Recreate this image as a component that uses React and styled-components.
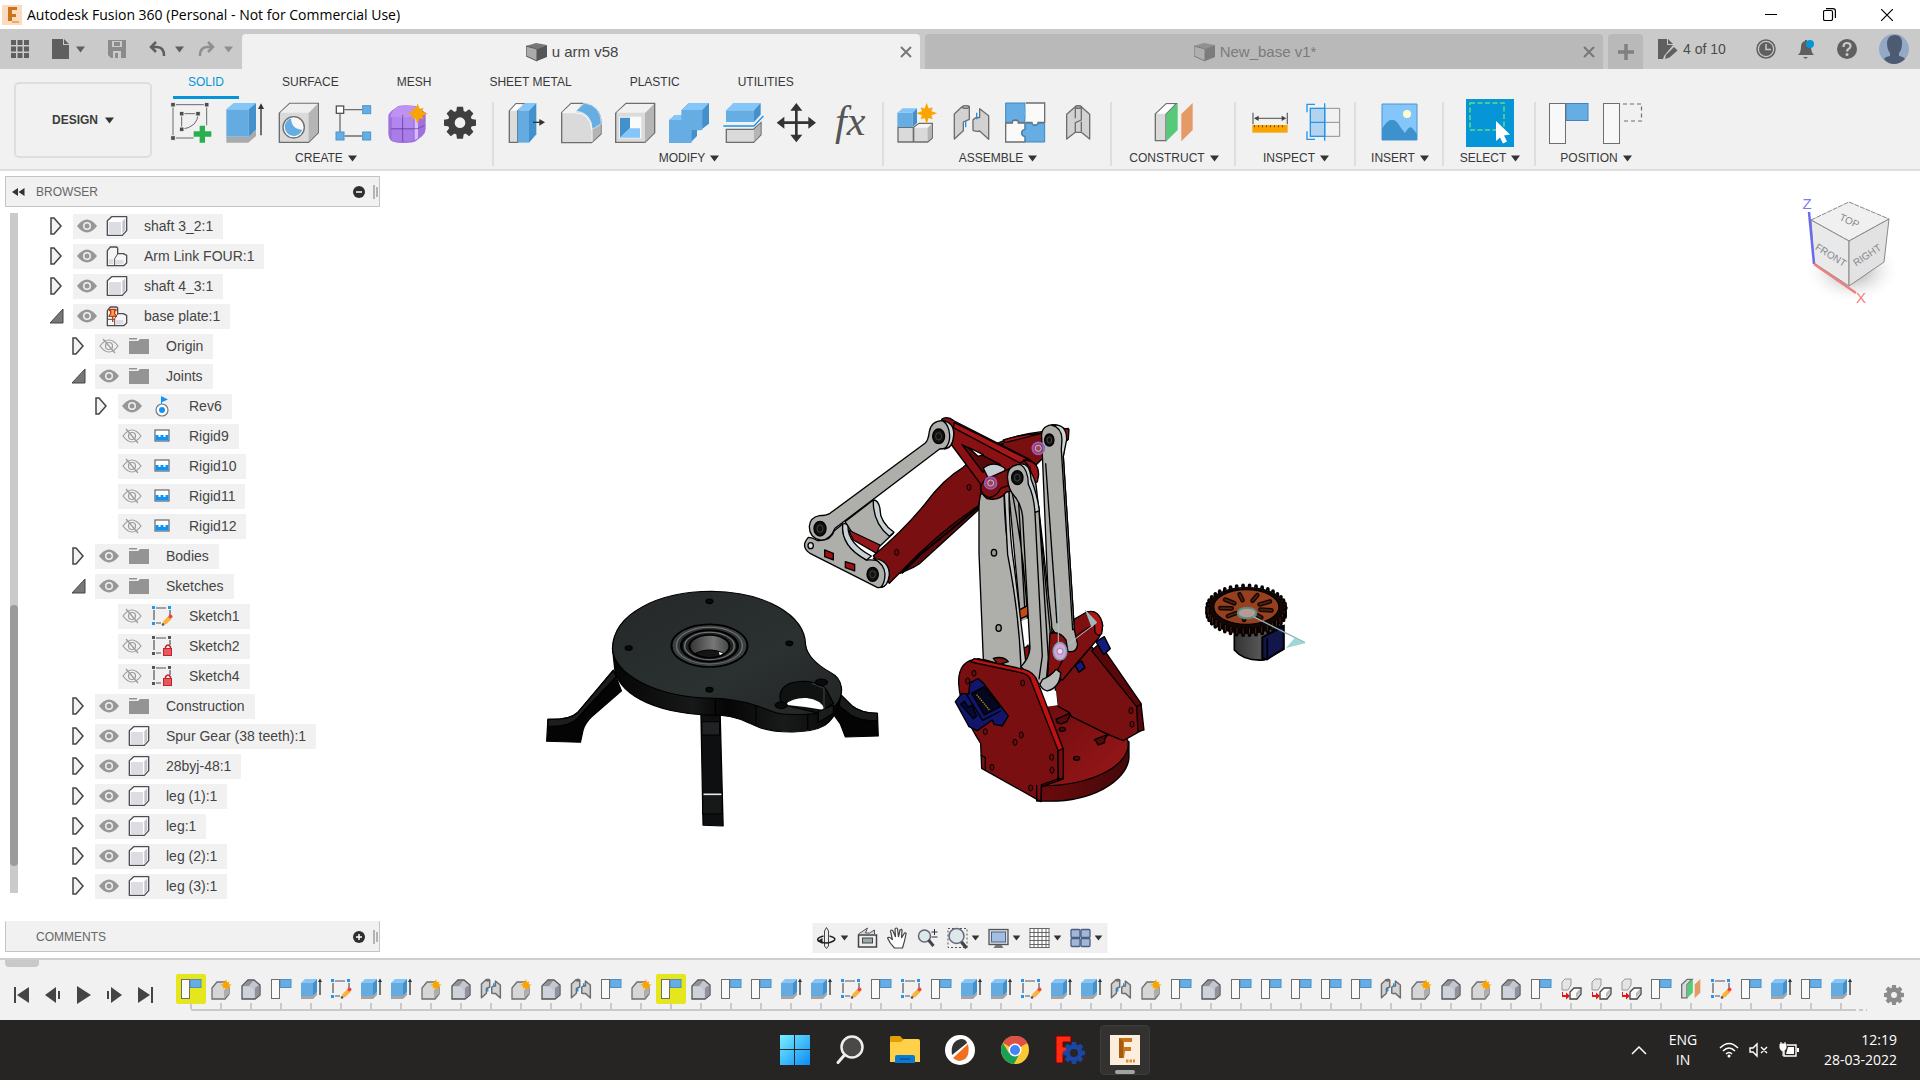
import React from "react";
import styled, { createGlobalStyle } from "styled-components";

const sans = '"Liberation Sans", Arial, sans-serif';
const system = '"Open Sans", "Noto Sans", sans-serif';

const GlobalStyle = createGlobalStyle`
  * { box-sizing: border-box; }
  body { margin: 0; background: #fff; font-family: ${sans}; color: #444; }
  button { border: 0; padding: 0; margin: 0; background: none; font: inherit; color: inherit; }
  ul { list-style: none; margin: 0; padding: 0; }
  svg { display: block; flex: none; }
`;

const Page = styled.div`
  min-height: 100vh;
  display: flex;
  flex-direction: column;
`;

/* ---------- title bar ---------- */
const TitleBar = styled.header`
  display: flex;
  align-items: center;
  height: 29px;
  padding: 0 4px 0 2px;
  gap: 5px;
  background: #fff;
  font-family: ${system};
  color: #000;
`;
const Title = styled.h1`
  margin: 0;
  flex: 1;
  font-size: 14px;
  font-weight: 400;
  line-height: 20px;
`;
const WindowControls = styled.div`
  display: flex;
`;
const WindowButton = styled.button`
  width: 58px;
  height: 29px;
  display: flex;
  align-items: center;
  justify-content: center;
`;

/* ---------- document tabs ---------- */
const DocumentBar = styled.div`
  display: flex;
  background: #cacaca;
  height: 40px;
  color: #4a4a4a;
`;
const QuickTools = styled.div`
  width: 242px;
  display: flex;
  align-items: center;
  gap: 23px;
  padding-left: 11px;
`;
const QuickPair = styled.div`
  display: flex;
  gap: 14px;
`;
const QuickButton = styled.button`
  display: flex;
  align-items: center;
  gap: ${(p) => p.$gap || 7}px;
  opacity: ${(p) => (p.$dim ? 0.55 : 1)};
`;
const DocumentTabs = styled.div`
  flex: 1;
  display: flex;
  gap: 5px;
  padding-top: 5px;
`;
const DocumentTab = styled.div`
  flex: 1;
  display: flex;
  align-items: center;
  padding: 0 5px;
  border-radius: 4px 4px 0 0;
  background: ${(p) => (p.$active ? "#f1f1f1" : "#b9b9b9")};
  color: ${(p) => (p.$active ? "#444" : "#7b7b7b")};
`;
const TabTitle = styled.button`
  flex: 1;
  display: flex;
  align-items: center;
  justify-content: center;
  gap: 5px;
  font-size: 15px;
  line-height: 20px;
`;
const CloseButton = styled.button`
  width: 18px;
  height: 20px;
  display: flex;
  align-items: center;
  justify-content: center;
`;
const NewTabButton = styled.button`
  width: 35px;
  display: flex;
  align-items: center;
  justify-content: center;
  border-radius: 4px 4px 0 0;
  background: #b9b9b9;
`;
const AccountTools = styled.div`
  width: 277px;
  display: flex;
  align-items: center;
  justify-content: space-between;
  padding: 0 11px 0 15px;
`;
const DocumentLimit = styled.button`
  display: flex;
  align-items: center;
  gap: 5px;
  font-size: 14px;
  line-height: 20px;
  padding-right: 8px;
`;

/* ---------- ribbon ---------- */
const Ribbon = styled.div`
  display: flex;
  padding-left: 14px;
  gap: 8px;
  background: #f1f1f1;
  border-bottom: 2px solid #dfdfdf;
`;
const WorkspaceButton = styled.button`
  width: 138px;
  height: 76px;
  margin-top: 13px;
  display: flex;
  align-items: center;
  justify-content: center;
  gap: 7px;
  border: 2px solid #dedede;
  border-radius: 5px;
  font-size: 12px;
  font-weight: 700;
  color: #3c3c3c;
`;
const RibbonBody = styled.div`
  flex: 1;
  display: flex;
  flex-direction: column;
`;
const RibbonTabs = styled.nav`
  display: flex;
  gap: 28px;
  padding-left: 13px;
`;
const RibbonTab = styled.button`
  height: 30px;
  padding: 0 15px;
  font-size: 12px;
  line-height: 27px;
  border-bottom: 3px solid ${(p) => (p.$active ? "#0696d7" : "transparent")};
  color: ${(p) => (p.$active ? "#0696d7" : "#383838")};
`;
const RibbonGroups = styled.div`
  display: flex;
  padding-bottom: 1px;
`;
const RibbonGroup = styled.section`
  display: flex;
  flex-direction: column;
  align-items: center;
  min-width: ${(p) => p.$min || 0}px;
  padding: 0 4px 0 ${(p) => (p.$first ? 4 : 6)}px;
`;
const RibbonDivider = styled.div`
  width: 2px;
  height: 64px;
  margin-top: 3px;
  background: #dedede;
`;
const ToolRow = styled.div`
  display: flex;
  height: 48px;
`;
const ToolButton = styled.button`
  width: 54px;
  height: 48px;
  display: flex;
  align-items: center;
  justify-content: center;
`;
const GroupLabel = styled.button`
  display: flex;
  align-items: center;
  gap: 5px;
  height: 20px;
  margin-top: 1px;
  font-size: 12px;
  line-height: 20px;
  color: #383838;
`;

/* ---------- workspace ---------- */
const Workspace = styled.main`
  position: relative;
  flex: 1;
  display: flex;
  background: #fff;
`;
const Scene = styled.svg`
  position: absolute;
  inset: 0;
  width: 100%;
  height: 100%;
`;
const ViewCube = styled.svg`
  position: absolute;
  top: 14px;
  right: 10px;
`;
const SidePanel = styled.aside`
  position: relative;
  width: 375px;
  margin: 5px 0 6px 5px;
  display: flex;
  flex-direction: column;
`;
const PanelBar = styled.div`
  display: flex;
  align-items: center;
  height: 31px;
  padding: 0 1px 0 6px;
  border: 1px solid #c4c4c4;
  border-top-color: ${(p) => (p.$open ? "#c4c4c4" : "#f1f1f1")};
  background: #f1f1f1;
  font-size: 12px;
  line-height: 20px;
  color: #666;
`;
const PanelLead = styled.span`
  width: 24px;
`;
const PanelTitle = styled.span`
  flex: 1;
`;
const PanelButton = styled.button`
  margin-right: 8px;
`;
const TreeArea = styled.div`
  flex: 1;
  display: flex;
  gap: 32px;
  padding: 4px 0 0 5px;
`;
const ScrollTrack = styled.div`
  width: 8px;
  height: 680px;
  margin-top: 2px;
  padding-top: 392px;
  background: #c9cacb;
`;
const ScrollThumb = styled.div`
  height: 261px;
  border-radius: 4px;
  background: #9a9b9c;
`;
const levels = [0, 22, 45];
const TreeRow = styled.li`
  display: flex;
  align-items: center;
  height: 30px;
  padding-left: ${(p) => levels[p.$level]}px;
`;
const Expander = styled.button`
  width: 23px;
  height: 22px;
`;
const TreeChip = styled.div`
  display: flex;
  align-items: center;
  height: 25px;
  padding: 0 10px 0 4px;
  background: #f1f1f1;
  font-size: 14px;
  line-height: 25px;
`;
const TreeIcon = styled.span`
  width: 22px;
  margin: 0 16px 0 9px;
`;
const NavBar = styled.div`
  position: absolute;
  left: 50%;
  bottom: 5px;
  transform: translateX(-50%);
  display: flex;
  align-items: center;
  gap: 8px;
  height: 30px;
  padding: 0 5px 0 3px;
  background: #f0f0f0;
`;
const NavButton = styled.button`
  display: flex;
  align-items: center;
  gap: 3px;
`;

/* ---------- timeline ---------- */
const Timeline = styled.section`
  position: relative;
  display: flex;
  height: 62px;
  padding-left: 13px;
  border-top: 2px solid #cecece;
  background: #f1f1f1;
`;
const TimelineHandle = styled.div`
  position: absolute;
  left: 5px;
  top: 0;
  width: 34px;
  height: 7px;
  border-radius: 0 0 4px 4px;
  background: #c9c9c9;
`;
const Playback = styled.div`
  width: 164px;
  display: flex;
  align-items: flex-start;
  gap: 13px;
  padding-top: 26px;
`;
const FeatureTrack = styled.ol`
  flex: 1;
  display: flex;
  margin: 0;
  padding: 14px 0 0;
  list-style: none;
`;
const Feature = styled.li`
  width: 30px;
  height: 37px;
  border-bottom: 2px solid #c9c9c9;
  &:first-child { border-image: linear-gradient(to right, transparent 50%, #c9c9c9 50%) 1; }
`;
const FeatureButton = styled.button`
  display: flex;
  align-items: center;
  justify-content: center;
  width: 30px;
  height: 30px;
  border-radius: 2px;
  background: ${(p) => (p.$marked ? "#e5e71c" : "transparent")};
`;
const Tick = styled.div`
  width: 2px;
  height: 6px;
  margin: -1px auto 0;
  background: #c9c9c9;
`;
const TrackEnd = styled.li`
  width: 11px;
  height: 2px;
  margin-top: 35px;
  background: repeating-linear-gradient(to right, transparent 0 3px, #c9c9c9 3px 7px);
`;
const SettingsButton = styled.button`
  width: 53px;
  display: flex;
  align-items: center;
  justify-content: center;
  padding-top: 10px;
`;

/* ---------- taskbar ---------- */
const Taskbar = styled.footer`
  display: grid;
  grid-template-columns: 1fr auto 1fr;
  height: 60px;
  background: #262524;
  color: #fff;
  font-family: ${system};
`;
const AppRow = styled.div`
  grid-column: 2;
  display: flex;
  align-items: center;
  gap: 5px;
`;
const AppButton = styled.button`
  width: 50px;
  height: 50px;
  display: flex;
  flex-direction: column;
  align-items: center;
  justify-content: center;
  border-radius: 4px;
  border: 1px solid ${(p) => (p.$active ? "#3c3c3b" : "transparent")};
  background: ${(p) => (p.$active ? "#333231" : "transparent")};
  padding-top: ${(p) => (p.$active ? 8 : 0)}px;
  gap: 5px;
`;
const ActiveMark = styled.span`
  width: 20px;
  height: 4px;
  border-radius: 2px;
  background: #a3a3a2;
`;
const Tray = styled.div`
  display: flex;
  align-items: center;
  justify-content: flex-end;
  gap: 21px;
  padding-right: 23px;
  font-size: 14px;
  line-height: 20px;
`;
const Language = styled.button`
  width: 30px;
  text-align: center;
`;
const Status = styled.button`
  display: flex;
  align-items: center;
  gap: 10px;
`;
const Clock = styled.time`
  min-width: 77px;
  text-align: right;
`;

/* ---------- shared drawings ---------- */
const Caret = ({ color = "#333", size = 9 }) => (
  <svg width={size} height={size - 2} viewBox="0 0 9 7"><path d="M0 0.5h9L4.500 6.500z" fill={color} /></svg>
);

const Icon = ({ box, size = 44, h, children }) => (
  <svg width={size} height={h || size} viewBox={box} aria-hidden="true">{children}</svg>
);

const G = "#6e6e6e";
const B = "#66ade3";
const Star = ({ x, y, r = 30, c = "#f9a400" }) => {
  const pts = [];
  for (let i = 0; i < 16; i++) {
    const a = (Math.PI * i) / 8 - Math.PI / 2;
    const q = i % 2 ? r * 0.48 : i % 4 ? r * 0.8 : r;
    pts.push(`${(x + q * Math.cos(a)).toFixed(1)},${(y + q * Math.sin(a)).toFixed(1)}`);
  }
  return <polygon points={pts.join(" ")} fill={c} />;
};
const Cog = ({ x, y, r, hole, c }) => (
  <g>
    {[0, 45, 90, 135, 180, 225, 270, 315].map((a) => (
      <path key={a} d={`M${x - r * 0.24} ${y - r * 0.65}l${r * 0.05} ${-r * 0.35}h${r * 0.38}l${r * 0.05} ${r * 0.35}z`} fill={c} transform={`rotate(${a} ${x} ${y})`} />
    ))}
    <circle cx={x} cy={y} r={(r * 0.76 + hole) / 2} fill="none" stroke={c} strokeWidth={r * 0.76 - hole} />
  </g>
);
const Joint = ({ paired, w = 4 }) => (
  <g fill="#d2d2d2" stroke={G} strokeWidth={w} strokeLinejoin="round">
    {paired ? (
      <>
        <path d="M223 162l22-21q14-6 23-1v38l-18 8v26l-27 25z" />
        <ellipse cx="257" cy="141" rx="10" ry="4" fill="#bbb" />
        <path d="M326 238V167l-27-21v27q-12-2-20 6v32q10 5 20 2z" />
        <path d="M257 182v20M290 158v20" stroke="#1b93ea" />
      </>
    ) : (
      <>
        <path d="M560 163l26-23q10-4 18 0l25 23v74l-25-20h-18l-26 20z" />
        <path d="M586 140v35M604 140v40l-18 8v28M604 180l-18 8M604 215v-30" fill="none" />
        <ellipse cx="595" cy="141" rx="9" ry="4" fill="#aaa" />
      </>
    )}
  </g>
);

const tools = {
  sketch: (
    <Icon box="507 303 132 132">
      <path d="M519 314h101v62M519 314v100h62M545 341h49M545 341v47M594 341q0 40-49 47" fill="none" stroke="#6a6a6a" strokeWidth="3" />
      {[[519, 314], [620, 314], [519, 414], [545, 341], [594, 341], [545, 388]].map(([x, y]) => (
        <rect key={x + "-" + y} x={x - 7} y={y - 7} width="14" height="14" fill="#4c4c4c" stroke="#f1f1f1" strokeWidth="3" />
      ))}
      <path d="M599 377h16v17h19v16h-19v18h-16v-18h-18v-16h18z" fill="#28b04f" />
    </Icon>
  ),
  extrude: (
    <Icon box="669 303 132 132">
      <path d="M679 410h66l23-20v18l-23 20h-66z" fill="#aaa" />
      <path d="M679 328l22-19h67l-22 19z" fill="#84c5fa" />
      <path d="M679 328h67v82h-67z" fill="#64abe2" />
      <path d="M746 328l22-19v80l-22 21z" fill="#4290cc" />
      <path d="M783 406V322" stroke="#333" strokeWidth="4" />
      <path d="M774 327l9-17 9 17z" fill="#333" />
    </Icon>
  ),
  hole: (
    <Icon box="831 303 132 132">
      <path d="M838 340l31-30h86v88l-29 29h-88z" fill="#dadada" stroke={G} strokeWidth="4" />
      <path d="M840 338l30-27h83l-27 27z" fill="#efefef" />
      <path d="M926 340l27-28v86l-27 28z" fill="#b5b5b5" />
      <circle cx="881" cy="382" r="32" fill="#f8f8f8" stroke={G} strokeWidth="4" />
      <path d="M873 355a27 27 0 1 0 34 34q-32 0-34-34z" fill={B} />
    </Icon>
  ),
  pattern: (
    <Icon box="984 303 132 132">
      <path d="M1024 329h53M1011 341v55M1024 408h53" stroke={G} strokeWidth="4" />
      <rect x="1000" y="318" width="22" height="22" fill="#fff" stroke="#555" strokeWidth="4" />
      {[[1078, 316], [1078, 395], [998, 395]].map(([x, y]) => <rect key={x + y} x={x + 1} y={y + 1} width="24" height="24" fill={B} stroke="#4896d3" strokeWidth="3" />)}
    </Icon>
  ),
  form: (
    <Icon box="1149 303 132 132">
      <path d="M1159 350q0-10 10-18l20-14q20-5 52 0l30 20v50q0 10-10 20l-20 16q-10 6-40 5t-35-8q-8-8-7-30z" fill="#a071dc" />
      <path d="M1165 350q5-25 30-32h40q15 5 12 20l-14 14q-35 5-68 0z" fill="#bd92f3" />
      <rect x="1170" y="352" width="30" height="34" rx="5" fill="#b087ee" /><rect x="1203" y="352" width="31" height="34" rx="5" fill="#b087ee" />
      <rect x="1170" y="389" width="30" height="35" rx="5" fill="#a97de8" /><rect x="1203" y="389" width="31" height="35" rx="5" fill="#a97de8" />
      <path d="M1238 352v68l10-5V355z" fill="#d7bcff" /><path d="M1166 386h82l20-10M1202 345v80" stroke="#5f3c9a" strokeWidth="2" fill="none" />
      <Star x={1247} y={341} r={31} />
    </Icon>
  ),
  gear: <Icon box="1317 303 132 132"><Cog x={1380} y={368} r={48} hole={16} c="#3f3f3f" /></Icon>,
  press: (
    <Icon box="45 303 132 132">
      <path d="M58 333l20-22h35l-30 22v94H58z" fill="#dcdcdc" stroke={G} strokeWidth="4" /><path d="M60 332l18-19h20l-19 19z" fill="#fff" />
      <path d="M83 332l22-23h34l-22 23z" fill="#84c5fa" /><path d="M83 332h34v96H83z" fill="#64abe2" /><path d="M117 332l22-23v94l-22 25z" fill="#4290cc" />
      <path d="M129 367h22" stroke="#333" strokeWidth="4" /><path d="M148 357l17 10-17 10z" fill="#333" />
    </Icon>
  ),
  fillet: (
    <Icon box="207 303 132 132">
      <path d="M215 338l28-28h35q55 8 55 60v32l-28 26h-90z" fill="#dadada" stroke={G} strokeWidth="4" />
      <path d="M217 337l27-25h30l-18 25z" fill="#f3f3f3" /><path d="M305 390l27-20v30l-27 27z" fill="#b5b5b5" />
      <path d="M258 333l25-24q50 7 51 62l-27 17q-3-50-49-55z" fill={B} stroke="#f1f1f1" strokeWidth="2" />
      <path d="M217 338h35q50 0 54 55v32" fill="none" stroke="#fafafa" strokeWidth="3" />
    </Icon>
  ),
  shell: (
    <Icon box="369 303 132 132">
      <path d="M377 340l31-30h86v88l-29 29h-88z" fill="#dadada" stroke={G} strokeWidth="4" />
      <path d="M379 338l30-26h83l-27 26z" fill="#f1f1f1" /><path d="M465 340l27-28v86l-27 28z" fill="#b5b5b5" />
      <path d="M388 350h66v65h-66z" fill="#fafafa" /><path d="M390 353h30v32l-30 28z" fill="#4290cc" /><path d="M390 413l30-28h30v28z" fill="#84c5fa" />
    </Icon>
  ),
  combine: (
    <Icon box="531 303 132 132">
      <path d="M537 361l18-16h20v-15l22-21h60v62l-26 20h-10v17l-20 20h-64z" fill="#4290cc" />
      <path d="M537 361h38v-31h62v60h-32v38h-68z" fill="#66ade3" /><path d="M575 330l22-21h60l-20 21zM537 361l18-16h20v16z" fill="#84c5fa" />
    </Icon>
  ),
  split: (
    <Icon box="690 303 132 132">
      <path d="M705 331l22-22h82l-20 22z" fill="#84c5fa" /><path d="M705 331h84v35h-84z" fill="#66ade3" /><path d="M789 331l20-22v35l-20 22z" fill="#4290cc" />
      <path d="M697 378h92l28-30" fill="none" stroke="#1b93ea" strokeWidth="4" />
      <path d="M706 388h82l22-20v36l-22 23h-82z" fill="#dadada" stroke={G} strokeWidth="4" /><path d="M789 389l19-18v33l-19 21z" fill="#b5b5b5" />
    </Icon>
  ),
  move: (
    <Icon box="855 303 132 132">
      <path d="M919 328v80M880 368h78" stroke="#333" strokeWidth="8" />
      <path d="M901 332l18-23 18 23zM901 404l18 23 18-23zM883 350l-23 18 23 18zM955 350l23 18-23 18z" fill="#333" />
    </Icon>
  ),
  fx: (
    <svg width="54" height="60" viewBox="0 0 54 60"><text x="11" y="42" fontFamily='"Liberation Serif", serif' fontStyle="italic" fontSize="42" fill="#555">fx</text></svg>
  ),
  component: (
    <Icon box="45 123 132 132">
      <path d="M54 202h46v44H54zM101 202l16-12h40v44l-14 12h-42z" fill="#dadada" stroke={G} strokeWidth="4" /><path d="M103 203l15-11h36l-12 11z" fill="#f5f5f5" />
      <path d="M143 204l12-11v40l-12 10z" fill="#b5b5b5" />
      <path d="M52 158h46v43H52z" fill={B} /><path d="M52 158l16-13h43l-13 13z" fill="#84c5fa" /><path d="M98 158l13-13v44l-13 12z" fill="#4290cc" />
      <Star x={140} y={160} r={32} />
    </Icon>
  ),
  joint: <Icon box="207 123 132 132"><Joint paired /></Icon>,
  rigidGroup: (
    <Icon box="369 123 132 132">
      <path d="M377 129h58v22q10-2 10 9t-10 9v18h-20q2-8-9-8t-9 8h-20z" fill={B} stroke="#4086bd" strokeWidth="3" />
      <path d="M437 129h57v58h-20q1 8-9 8t-9-8h-19" fill="#fafafa" stroke={G} strokeWidth="4" />
      <path d="M377 189h20q-2-8 9-8t9 8h20v20q-10 0-10 10t10 10v17h-58z" fill="#fafafa" stroke={G} strokeWidth="4" />
      <path d="M436 190h19q0 7 10 7t10-7h19v56h-58v-17q-10 0-10-10t10-10z" fill={B} stroke="#4086bd" strokeWidth="3" />
    </Icon>
  ),
  asBuilt: <Icon box="531 123 132 132"><Joint /></Icon>,
  plane: (
    <Icon box="816 123 132 132">
      <path d="M826 162l33-31h30l-31 32v79h-32z" fill="#dadada" stroke={G} strokeWidth="4" /><path d="M829 161l30-28h25l-28 28z" fill="#fff" />
      <path d="M859 162l34-33v81l-34 34z" fill="#58c879" /><path d="M904 162l34-33v81l-34 34z" fill="#e59a65" />
    </Icon>
  ),
  measure: (
    <Icon box="1101 123 132 132">
      <path d="M1119 158v35M1222 158v35M1125 175h90" stroke={G} strokeWidth="4" /><path d="M1136 167l-14 8 14 8zM1205 167l14 8-14 8z" fill="#444" />
      <rect x="1117" y="195" width="106" height="23" fill="#f9a400" /><path d="M1122 199h96" stroke="#6b5210" strokeWidth="6" strokeDasharray="3 9" />
    </Icon>
  ),
  interference: (
    <Icon box="1263 123 132 132">
      <path d="M1335 145h44v84h-44M1290 187h89" fill="none" stroke="#8e8e8e" strokeWidth="3" />
      <rect x="1291" y="145" width="43" height="84" fill="#b4d3ee" stroke="#2196ea" strokeWidth="4" />
      <path d="M1334 130v112M1291 187h43M1305 133h-24v24M1305 238h-24v-24" fill="none" stroke="#2196ea" strokeWidth="4" />
    </Icon>
  ),
  insert: (
    <Icon box="0 0 44 44">
      <path d="M4 3h35v36H4z" fill="#84c5fa" stroke="#4896d3" />
      <circle cx="29" cy="13" r="4" fill="#fffbd2" /><path d="M4 28q10-18 19-1l4 5q5-9 8-4l4 5v6H4z" fill="#3d92ce" />
    </Icon>
  ),
  select: (
    <Icon box="0 0 48 48" size={48}>
      <rect width="48" height="48" fill="#0696d7" />
      <rect x="4" y="4" width="34" height="27" fill="none" stroke="#62dc80" strokeWidth="1.500" strokeDasharray="5 2.500" />
      <path d="M30 22v20l4-3.500 3 6 4-2-3-6 6-1z" fill="#fff" />
    </Icon>
  ),
  capture: (
    <Icon box="0 0 44 44"><rect x="19" y="2.500" width="22" height="17" fill={B} stroke="#4086bd" /><rect x="2.500" y="2.500" width="16" height="40" fill="#f8f8f8" stroke={G} /></Icon>
  ),
  revert: (
    <Icon box="0 0 44 44"><path d="M22 3h18.500v17H22" fill="none" stroke={G} strokeDasharray="4 3" strokeWidth="1.200" /><rect x="2.500" y="2.500" width="16" height="40" fill="#f8f8f8" stroke={G} /></Icon>
  ),
};

const groups = [
  { name: "CREATE", items: ["sketch", "extrude", "hole", "pattern", "form", "gear"] },
  { name: "MODIFY", items: ["press", "fillet", "shell", "combine", "split", "move", "fx"] },
  { name: "ASSEMBLE", items: ["component", "joint", "rigidGroup", "asBuilt"] },
  { name: "CONSTRUCT", items: ["plane"], min: 122 },
  { name: "INSPECT", items: ["measure", "interference"] },
  { name: "INSERT", items: ["insert"], min: 86 },
  { name: "SELECT", items: ["select"], min: 90 },
  { name: "POSITION", items: ["capture", "revert"] },
];

/* ---------- browser tree ---------- */
const Eye = ({ off }) => (
  <svg width="20" height="16" viewBox="0 0 20 16">
    {off ? (
      <g fill="none" stroke="#9b9b9b" strokeWidth="1.200"><path d="M1 8q9-12 18 0q-9 12-18 0z" /><circle cx="10" cy="8" r="3.500" /><path d="M4 1l12 14" /></g>
    ) : (
      <g><path d="M0 8q10-13 20 0q-10 13-20 0z" fill="#979797" /><circle cx="10" cy="8" r="4" fill="#f1f1f1" /><circle cx="10" cy="8" r="2.500" fill="#979797" /></g>
    )}
  </svg>
);
const treeIcons = {
  body: (
    <Icon box="320 135 66 66" size={22}>
      <path d="M324 152l13-12h45v42l-13 14h-45z" fill="#fff" stroke="#4e4e52" strokeWidth="4" strokeLinejoin="round" />
      <path d="M328 156h37v36h-37z" fill="#dcdde2" /><path d="M369 154l9-9v36l-9 10z" fill="#c4c5cc" />
    </Icon>
  ),
  part: (
    <Icon box="320 225 66 66" size={22}>
      <path d="M324 242l9-11h19l3 3v17h17l10 5v23l-9 8h-49z" fill="#f6f6f8" stroke="#4e4e52" strokeWidth="4" strokeLinejoin="round" />
      <path d="M328 268h14v14h-14zM350 270h22v13h-22z" fill="#dcdde2" />
      <path d="M346 286v-20l9-14" fill="none" stroke="#4e4e52" strokeWidth="3" />
    </Icon>
  ),
  pinned: (
    <Icon box="320 225 66 66" size={22}>
      <path d="M324 242l9-11h19l3 3v17h17l10 5v23l-9 8h-49z" fill="#f6f6f8" stroke="#4e4e52" strokeWidth="4" strokeLinejoin="round" />
      <path d="M350 270h22v13h-22z" fill="#dcdde2" />
      <path d="M346 286v-20l9-14M324 268h22" fill="none" stroke="#4e4e52" strokeWidth="3" />
      <path d="M330 238h20v4h-4v10q5 2 5 7h-22q0-5 5-7v-10h-4z" fill="#f0a93c" stroke="#c8381c" strokeWidth="4" />
      <path d="M340 260v16" stroke="#c8381c" strokeWidth="4" />
    </Icon>
  ),
  folder: <Icon box="0 0 22 22" size={22}><path d="M1 3h8v1.500H1zM1 6h9l2-2h9v15H1z" fill="#949494" /></Icon>,
  revolute: (
    <Icon box="0 0 22 22" size={22}><circle cx="11" cy="15" r="6" fill="#fff" stroke="#777" strokeWidth="1.200" /><circle cx="11" cy="15" r="3" fill="#0f94f5" /><path d="M10.500 9V2" stroke="#0f94f5" /><path d="M10 1l7 3.500-7 3z" fill="#0f94f5" /></Icon>
  ),
  rigid: (
    <Icon box="0 0 22 22" size={22}><rect x="4" y="5" width="14" height="11" fill="#fff" stroke="#666" strokeWidth="1.200" /><path d="M4.500 10h3v2h2v-2h3v2h2v-2h3v5.500h-13z" fill="#0f94f5" /></Icon>
  ),
  sketchEdit: (
    <Icon box="0 0 22 22" size={22}>
      <path d="M5 3h10M3 5v10M19 5v5M5 18h5" stroke="#555" strokeWidth="1.200" fill="none" />
      <path d="M1 1h3v3H1zM17 1h3v3h-3zM1 17h3v3H1z" fill="#2196ea" />
      <path d="M11 20l1.500-4 5-5 3 3-5 5z" fill="#fbb23c" /><circle cx="19.500" cy="11.500" r="2" fill="#ee4444" /><circle cx="12" cy="19.500" r="1.300" fill="#555" />
    </Icon>
  ),
  sketchLock: (
    <Icon box="0 0 22 22" size={22}>
      <path d="M5 3h10M3 5v10M19 5v5M5 18h5" stroke="#555" strokeWidth="1.200" fill="none" />
      <path d="M1 1h3v3H1zM17 1h3v3h-3zM1 17h3v3H1z" fill="#555" />
      <path d="M14.500 14v-2q2.500-4 5 0v2" stroke="#c8202a" strokeWidth="1.500" fill="none" /><rect x="12.500" y="13.500" width="8" height="7" fill="#e3595f" stroke="#c8202a" />
    </Icon>
  ),
};
const tree = [
  [0, "closed", 1, "body", "shaft 3_2:1"],
  [0, "closed", 1, "part", "Arm Link FOUR:1"],
  [0, "closed", 1, "body", "shaft 4_3:1"],
  [0, "open", 1, "pinned", "base plate:1"],
  [1, "closed", 0, "folder", "Origin"],
  [1, "open", 1, "folder", "Joints"],
  [2, "closed", 1, "revolute", "Rev6"],
  [2, "", 0, "rigid", "Rigid9"],
  [2, "", 0, "rigid", "Rigid10"],
  [2, "", 0, "rigid", "Rigid11"],
  [2, "", 0, "rigid", "Rigid12"],
  [1, "closed", 1, "folder", "Bodies"],
  [1, "open", 1, "folder", "Sketches"],
  [2, "", 0, "sketchEdit", "Sketch1"],
  [2, "", 0, "sketchLock", "Sketch2"],
  [2, "", 0, "sketchLock", "Sketch4"],
  [1, "closed", 1, "folder", "Construction"],
  [1, "closed", 1, "body", "Spur Gear (38 teeth):1"],
  [1, "closed", 1, "body", "28byj-48:1"],
  [1, "closed", 1, "body", "leg (1):1"],
  [1, "closed", 1, "body", "leg:1"],
  [1, "closed", 1, "body", "leg (2):1"],
  [1, "closed", 1, "body", "leg (3):1"],
];
const Grip = () => <svg width="5" height="14" viewBox="0 0 5 14"><path d="M1 0v14M4 2v10" stroke="#777" /></svg>;
const RoundSign = ({ plus }) => (
  <svg width="12" height="12" viewBox="0 0 12 12"><circle cx="6" cy="6" r="6" fill="#2f2f2f" /><path d={plus ? "M3 6h6M6 3v6" : "M3 6h6"} stroke="#fff" strokeWidth="1.500" /></svg>
);

/* ---------- timeline features ---------- */
const mini = {
  f: <Icon box="0 0 22 22" size={22}><rect x="10" y="1.500" width="11" height="8" fill={B} stroke="#4a90c4" /><rect x="1.500" y="1.500" width="8" height="19" fill="#fafafa" stroke={G} /></Icon>,
  c: <Icon box="0 0 22 22" size={22}><path d="M2 10l5-6h8l4 5v7l-4 5H2z" fill="#d6d6d6" stroke={G} strokeWidth="1.300" /><path d="M14 12l5-3v7l-5 4z" fill="#aeaeae" /><Star x={16} y={7} r={6} /></Icon>,
  b: <Icon box="0 0 22 22" size={22}><path d="M2 8l6-6h6l6 5v10l-5 4H2z" fill="#c3c6cf" stroke="#555" strokeWidth="1.300" /><path d="M3 8l5-5h5l-4 5zM15 10l4-3v10l-4 3z" fill="#8f929b" /><path d="M3 9h7q4 2 4 6v5H3z" fill="#cfd2da" /></Icon>,
  e: <Icon box="0 0 22 22" size={22}><path d="M1 18h12l4-4v3l-4 4H1z" fill="#a5a5a5" /><path d="M1 5h12v13H1z" fill="#64abe2" /><path d="M1 5l4-4h12l-4 4z" fill="#84c5fa" /><path d="M13 5l4-4v13l-4 4z" fill="#4290cc" /><path d="M20 17V3" stroke="#333" strokeWidth="1.300" /><path d="M18 4l2-3.500L22 4z" fill="#333" /></Icon>,
  s: treeIcons.sketchEdit,
  j: <Icon box="215 129 120 120" size={22}><Joint paired w={8} /></Icon>,
  r: <Icon box="0 0 22 22" size={22}><path d="M2 4l3-3h6v6l-3 5H2z" fill="#e4e4e4" stroke="#999" /><path d="M10 14l4-4h7v6l-4 5h-7z" fill="#fafafa" stroke="#444" strokeWidth="1.300" /><path d="M16 15v5l4-5v-4z" fill="#bbb" /><path d="M3 14v3h3v-2.500l4 3.500-4 3.500V19H2v-5z" fill="#e81515" /></Icon>,
  p: <Icon box="816 123 132 132" size={22}><path d="M826 162l33-31h30l-31 32v79h-32z" fill="#dadada" stroke={G} strokeWidth="8" /><path d="M859 162l34-33v81l-34 34z" fill="#58c879" /><path d="M904 162l34-33v81l-34 34z" fill="#e59a65" /></Icon>,
};
const features = "fcbfeseecbjcbjfcfbffeesfsfeeseejcfbfffffjcbcbfrrrfpsfefe".split("");

const playIcons = [
  ["First", "M2 1v16", "M16 1v16L4 9z"],
  ["Back", "M15 5v8", "M12 1v16L1 9z"],
  ["Play", "", "M2 0v18l14-9z"],
  ["Forward", "M2 5v8", "M5 1v16L16 9z"],
  ["Last", "M15 1v16", "M1 1v16L13 9z"],
];

/* ---------- canvas drawings ---------- */
const Hole = ({ x, y }) => <ellipse cx={x} cy={y} rx="6" ry="9" fill="#6b0c0e" stroke="#000" strokeWidth="3" />;
const Pin = ({ x, y, r = 18 }) => (
  <g><ellipse cx={x} cy={y} rx={r} ry={r + 4} fill="#111" /><ellipse cx={x} cy={y} rx={r / 2} ry={r / 2 + 2} fill="none" stroke="#444" strokeWidth="3" /></g>
);
const Mark = ({ x, y }) => (
  <g fill="none"><circle cx={x} cy={y} r="18" fill="#b87c9c" fillOpacity=".5" stroke="#9a5ac8" strokeWidth="5" /><circle cx={x} cy={y} r="9" stroke="#d9b5e8" strokeWidth="3" /></g>
);

const BasePlate = () => (
  <g transform="translate(530 400) scale(0.4273 0.3333)" stroke="#000" strokeWidth="3" strokeLinejoin="round">
    <defs>
      <linearGradient id="plateTop" x1="0" y1="0" x2="1" y2="1"><stop offset="0" stopColor="#242828" /><stop offset=".6" stopColor="#2b3031" /><stop offset="1" stopColor="#222526" /></linearGradient>
      <linearGradient id="plateSide" x1="0" x2="1" y1="0" y2="0"><stop offset="0" stopColor="#050505" /><stop offset=".35" stopColor="#171818" /><stop offset=".5" stopColor="#050505" /><stop offset=".75" stopColor="#191a1a" /><stop offset="1" stopColor="#050505" /></linearGradient>
      <linearGradient id="bore" x1="0" x2="1" y1="0" y2="0"><stop offset="0" stopColor="#333" /><stop offset=".6" stopColor="#777" /><stop offset="1" stopColor="#444" /></linearGradient>
    </defs>
    <path d="M195 810L120 925q-15 30-50 32H42l-3 67 79 3 6-36q5-22 20-40l70-78z" fill="#040404" />
    <path d="M195 812L120 925q-15 30-50 32l-28 2v20q50 2 70-25l20-30 70-95z" fill="#1c1d1d" />
    <path d="M728 885l25 32q20 22 60 23l2 68-77 3-12-40-16-28z" fill="#040404" />
    <path d="M728 885l25 32q20 22 60 23v22q-50 0-70-25l-20-20z" fill="#1a1c1c" />
    <path d="M400 940l5 336 47 2-7-338z" fill="#0d0f10" /><path d="M402 965h42v40h-42z" fill="#202223" /><path d="M404 1180h46v62h-46z" fill="#171919" /><path d="M406 1183h42" stroke="#e8e8e8" strokeWidth="5" />
    <path d="M193 745l6 70C215 890 300 945 445 946c50 6 65 24 95 38 40 16 115 18 150-8 30-25 38-80 38-115L600 800z" fill="url(#plateSide)" />
    <path d="M193 745C195 640 300 575 425 574c125 2 218 70 220 161 4 35 30 62 58 82 34 22 28 68 19 88-18 38-70 40-122 38-30-1-50-20-75-28-25-10-55-19-95-20C300 893 195 825 193 745z" fill="url(#plateTop)" />
    <path d="M434 896v50M529 916v62M650 942v47" />
    <path d="M585 890q2-44 53-46 50 2 60 36l12 30-35 30-78-24q-12-8-12-26z" fill="#101111" />
    <path d="M597 914q18-22 50-20 34 4 45 37-48-12-95-17z" fill="#fff" stroke="none" />
    <path d="M660 850l28 15v66" fill="none" stroke="#3a3c3c" />
    <path d="M675 935l35-20v25l-36 28z" fill="#1b1d1d" />
    <ellipse cx="420" cy="737" rx="89" ry="64" fill="#3b3f40" strokeWidth="5" />
    <ellipse cx="420" cy="737" rx="77" ry="55" fill="#303334" stroke="#6f7475" />
    <ellipse cx="420" cy="738" rx="66" ry="47" fill="#2a2c2d" strokeWidth="6" />
    <ellipse cx="420" cy="738" rx="58" ry="41" fill="#202223" stroke="#757a7b" />
    <ellipse cx="420" cy="739" rx="47" ry="34" fill="url(#bore)" strokeWidth="5" />
    <path d="M385 762q36-24 70 0-34 22-70 0z" fill="#151515" /><path d="M442 756l10 4-8 6z" fill="#fff" stroke="none" />
    {[[420, 604], [231, 744], [607, 730], [420, 869]].map(([x, y]) => <ellipse key={x + y} cx={x} cy={y} rx="8" ry="7" fill="#0a0a0a" />)}
    {[[682, 847], [588, 916]].map(([x, y]) => <ellipse key={x} cx={x} cy={y} rx="14" ry="10" fill="#0a0a0a" />)}
  </g>
);

const RobotArm = () => (
  <g transform="translate(790 400) scale(0.3333)" stroke="#000" strokeWidth="4" strokeLinejoin="round">
    <defs>
      <linearGradient id="disc" x1="0" x2="1" y1="0" y2="1"><stop offset="0" stopColor="#6d0c0e" /><stop offset="1" stopColor="#9c181a" /></linearGradient>
      <linearGradient id="rim" x1="0" x2="1" y1="0" y2="0"><stop offset="0" stopColor="#6b0b0c" /><stop offset="1" stopColor="#45080a" /></linearGradient>
    </defs>
    {/* turntable */}
    <path d="M745 1150l10 53c150 8 255-60 262-128v-50z" fill="url(#rim)" />
    <path d="M745 1158c170 0 285-68 268-138L850 915l-100 0z" fill="url(#disc)" />
    {/* rear plate */}
    <path d="M795 860l110-120 147 175 5 75-57 32-50-20-105-52-7-12-35-20z" fill="#780f11" />
    <path d="M905 752l24-22 124 180 9 80-18 5-4-75z" fill="#5a0709" />
    <path d="M1040 920l15-8" />
    <path d="M838 940l-40 18 4 10 10 4 18-6 8-14zM955 1003l-42 16 6 6 6 10 18-6 2-14z" fill="#55090b" />
    <path d="M756 878l42-6 5 44-35 4z" fill="#fff" stroke="none" />
    <Hole x={1023} y={932} /><Hole x={1026} y={973} />
    <ellipse cx="860" cy="1075" rx="9" ry="6" fill="#55090b" /><ellipse cx="817" cy="988" rx="9" ry="6" fill="#55090b" />
    <path d="M918 725l25-15 18 36-20 18zM855 795l20-12 10 20-18 14z" fill="#141b7c" />
    {/* crank */}
    <path d="M780 700l110-64q40 0 48 40-2 30-18 45L860 790l-42 50-60-20z" fill="#7f1012" />
    <path d="M890 636q40-10 48 40l-3 25q-10 12-20-5 0-40-25-60z" fill="#b01518" />
    <path d="M850 712l50-32" stroke="#300" />
    {/* far upper bracket */}
    <path d="M610 135q60-30 145-40l80-10-2 35-80 60-30 30-60-20-55-30z" fill="#7a0f11" />
    <path d="M640 120q55-18 115-20l-110 28z" fill="#a31518" />
    <path d="M815 84l22 4-2 30-15 12z" fill="#9a1315" />
    {/* far rod */}
    <path d="M755 112q-3-38 40-38 34 6 32 45l-7 50 33 520 10 45q-4 26-28 20l-30-40-27-40z" fill="#adada9" />
    <path d="M785 75q46-5 45 44l-10 50 33 520-5 0-34-540 2-30q0-36-31-44z" fill="#cfd6d8" />
    <path d="M767 190l34 480" fill="none" />
    <Pin x={778} y={120} r={14} />
    {/* inner rods */}
    <path d="M655 262l45-10 45 60 40 360 3 130-50 30-45-160z" fill="#a9a9a5" />
    <path d="M665 270q40 200 48 400M685 290l20 350M745 320l38 400" fill="none" />
    <path d="M684 632l30-16v30l-30 14z" fill="#c64a12" /><path d="M690 665l28-12v75l-20 20z" fill="#fff" stroke="none" />
    <path d="M700 745l18-8v60l-18-4zM780 700q30-8 48 20l5 30-30 60-30 20z" fill="#85100f" />
    {/* main column */}
    <path d="M567 285l75-25q0 120 22 250 20 140 42 280l-10 20-116-32-13-320z" fill="#aeaeaa" />
    <path d="M642 262h15q0 140 16 240l34 280-14 22q-5-160-40-340z" fill="#c5c9c9" />
    <ellipse cx="612" cy="458" rx="8" ry="10" fill="#999" /><ellipse cx="626" cy="684" rx="8" ry="10" fill="#999" />
    {/* forearm */}
    <path d="M330 520l50-58 185-152v20L390 490l-20 12z" fill="#5b0b0d" />
    <path d="M640 130l-75 30-45 42q-60 35-115 110-65 80-155 155l48 83 38-38q110-115 230-195l20-120z" fill="#7a0f11" />
    <path d="M335 520l55-55 175-143" fill="none" strokeWidth="6" />
    <Hole x={537} y={262} /><Hole x={320} y={457} />
    {/* rear gripper plate */}
    <path d="M165 365l85-65q20 10 20 45 15 35 40 55l-40 38-80-35z" fill="#aeaeaa" />
    <path d="M250 300q15 0 20 25-2 40 42 72l-14 12q-50-40-48-109z" fill="#c9d1d4" />
    <path d="M175 390l95 45-10 25-70-40z" fill="#94161a" />
    {/* elbow triangle */}
    <path d="M455 58q15-12 38 5l225 115q30 20 26 50-3 30-35 38l-60 10q-20 28-58 20-20-15-20-45L485 135z" fill="#8a1113" />
    <path d="M493 68l225 112-30 8-198-105z" fill="#a81619" />
    <path d="M516 134l115 60-25 3-27 20z" fill="#560a0c" /><path d="M535 142l45 22-16 5z" fill="#fff" />
    <path d="M580 205q30-25 65 0v15l-50 15z" fill="#c7ced0" />
    <path d="M572 262q5-25 40-35l55-25 15 45-50 18q-10 25-35 28-25-8-25-31z" fill="#7c0f11" />
    <path d="M700 180q45 0 46 44l-4 22-14 6-8-50z" fill="#9c1416" />
    {/* near rod */}
    <path d="M653 238q-5-40 35-45 35 3 50 60l9 80 28 440-7 82q-15 12-75-55 25-25 27-55l-22-395q-5-40-25-62-18-20-20-50z" fill="#aeaeaa" />
    <path d="M690 192q30-5 33 45 20 50 25 95l-13 6q-3-50-20-85 0-45-25-61z" fill="#c9d1d4" />
    <path d="M735 338l22 430-10 70" fill="none" />
    <path d="M758 838q25-10 40-30l14 10q-2 45-40 55-18-5-22-20z" fill="#b9bcbb" />
    <Pin x={682} y={233} r={17} />
    {/* forearm link */}
    <path d="M418 95q5-32 40-33 34 8 33 45-3 40-42 40L135 385q-15 38-45 35-32-8-32-40 2-28 30-33 20 0 32-7L405 130q10-8 13-35z" fill="#aeaeaa" />
    <path d="M458 62q36 6 33 45-3 38-28 40 18-16 16-42-2-30-21-43z" fill="#cfd6d8" />
    <Pin x={446} y={109} r={18} /><Pin x={90} y={386} r={18} />
    {/* gripper plate */}
    <path d="M55 412q10 0 28 10 40 2 50-30l25-20q-5 60 70 108 70-5 70 45-5 40-35 38L60 460q-30-20-5-48z" fill="#aeaeaa" />
    <path d="M158 372q12-4 16 8 0 50 70 88l-14 12q-78-40-72-108z" fill="#c9d1d4" />
    <path d="M250 475q48 5 48 50-5 35-25 37 12-15 12-40-2-30-35-47z" fill="#c9d1d4" />
    <Pin x={248} y={523} r={17} /><ellipse cx="62" cy="437" rx="8" ry="9" fill="#ddd" />
    <path d="M104 450l26 10v20l-26-10zM166 485l28 8v20l-28-10z" fill="#9c1013" />
    {/* front plate */}
    <path d="M610 775q30-8 45 10l-30 10z" fill="#7a1a10" />
    <path d="M506 850q-2-70 60-74l140 38 20 18 80 210 14 20v75l-65 23-2 45L575 1105l-3-75q-60-90-66-180z" fill="#790f11" />
    <path d="M552 776l150 32q30 8 40 35l78 205v85l-15 5-2-90-80-205q-5-20-30-25l-150-32z" fill="#c20f11" />
    <path d="M804 1052l16-6v88l-15 4z" fill="#7a0c0e" />
    <path d="M572 1065l14 8v38M740 1155v48h14v-48l55-20" fill="none" />
    {[[552, 820], [533, 843], [698, 849], [694, 1005], [675, 1027], [785, 1072], [786, 1111], [606, 1102], [722, 1164], [586, 995]].map(([x, y]) => <Hole key={x + y} x={x} y={y} />)}
    {/* servo */}
    <path d="M496 905l20-25 20 2 4-34 25-12 16 14 74 98-18 30-25-5-5-13-45 32-25-12z" fill="#11166b" />
    <path d="M545 880l38-20 48 60-48 25z" fill="#06071f" /><path d="M560 884l38 46" stroke="#a99618" strokeDasharray="4 3" />
    <path d="M530 885l48 76 55-28" fill="none" />
    <path d="M512 912l12-8 10 18 12-6 14 32-10 8z" fill="#070a35" />
    <Mark x={745} y={145} /><Mark x={602} y={249} />
    <ellipse cx="810" cy="754" rx="20" ry="26" fill="#cda8cf" stroke="#7fa0c4" strokeWidth="5" /><circle cx="810" cy="754" r="9" fill="#efdcf2" stroke="#b58cc8" />
    <path d="M885 630l35 38-85 65M805 560v170" fill="none" stroke="#a7c9c9" strokeWidth="3" /><path d="M885 630l35 35-15 18z" fill="#9fb9b6" stroke="none" />
  </g>
);

const GearMotor = () => {
  const teeth = Array.from({ length: 38 }, (_, i) => (i * 2 * Math.PI) / 38);
  return (
    <g transform="translate(1180 560) scale(0.3333)">
      <defs><linearGradient id="motor" x1="0" x2="1" y1="0" y2="0"><stop offset="0" stopColor="#333" /><stop offset=".5" stopColor="#555" /><stop offset="1" stopColor="#333" /></linearGradient></defs>
      <path d="M163 205v65q30 35 90 30l58-32v-70z" fill="url(#motor)" stroke="#000" strokeWidth="5" />
      <path d="M247 232l64-34v68l-50 32-14-3z" fill="#12164a" stroke="#000" strokeWidth="6" /><path d="M262 235v60" stroke="#000" strokeWidth="5" />
      <ellipse cx="199" cy="160" rx="118" ry="62" fill="#0a0503" />
      <ellipse cx="199" cy="143" rx="117" ry="63" fill="#120704" />
      {teeth.map((a) => (
        <g key={a}>
          <path d={`M${199 + 118 * Math.cos(a)} ${142 + 66 * Math.sin(a)}v${Math.sin(a) > 0 ? 18 : 4}`} stroke="#000" strokeWidth="11" strokeLinecap="round" />
          <path d={`M${199 + 115 * Math.cos(a)} ${142 + 63 * Math.sin(a)}v${Math.sin(a) > 0 ? 18 : 3}`} stroke="#5a2210" strokeWidth="3" />
        </g>
      ))}
      <ellipse cx="199" cy="141" rx="98" ry="52" fill="#96401f" stroke="#000" strokeWidth="4" />
      {[0, 40, 80, 120, 160, 200, 240, 280, 320].map((a) => {
        const t = ((a + 15) * Math.PI) / 180;
        const d = `M${199 + 44 * Math.cos(t)} ${143 + 23 * Math.sin(t)}L${199 + 78 * Math.cos(t)} ${141 + 39 * Math.sin(t)}`;
        return <g key={a} strokeLinecap="round"><path d={d} stroke="#150804" strokeWidth="14" /><path d={d} stroke="#4e2110" strokeWidth="5" /></g>;
      })}
      <ellipse cx="201" cy="159" rx="28" ry="16" fill="#b79a90" stroke="#588a8a" strokeWidth="6" />
      <path d="M220 170L375 248" stroke="#8fb5b5" strokeWidth="4" /><path d="M344 234l32 16-58 14z" fill="#9ed7d6" />
    </g>
  );
};

const navIcons = [
  ["Orbit", <svg width="22" height="22" viewBox="0 0 22 22"><path d="M9 4l2-3.500L13 4v15l-2 2.500L9 19z" fill="#eee" stroke="#444" /><path d="M8 9q-8 2-5 5 8 4 15 0 4-3-4-5" fill="none" stroke="#222" strokeWidth="1.500" /><path d="M7 11v6l-5-3z" fill="#222" /></svg>, true],
  ["Look at", <svg width="22" height="22" viewBox="0 0 22 22"><path d="M2 7l9-6-2 5h4l5-3v4" fill="#cfd6da" stroke="#555" /><rect x="2" y="8" width="18" height="12" fill="#eee" stroke="#444" strokeWidth="1.500" /><rect x="6" y="11" width="10" height="5" fill="#9aa" stroke="#444" /></svg>, false],
  ["Pan", <svg width="22" height="22" viewBox="0 0 22 22"><path d="M8 21Q3 16 1 11q2-2 5 2L4 4q1-2 2.500 0L9 10 8.500 2q1.500-2 2.500 0l1 8 1.500-7q2-1.500 2 .5L15 11l3-5q2-.5 1.500 1Q18 15 16 21z" fill="#fff" stroke="#444" strokeWidth="1.200" /></svg>, false],
  ["Zoom", <svg width="22" height="22" viewBox="0 0 22 22"><circle cx="8" cy="9" r="6" fill="#dde8ea" stroke="#667" strokeWidth="1.500" /><path d="M12 13l5 6" stroke="#444" strokeWidth="3" /><path d="M15 5h6M18 2v6M15 10h6" stroke="#333" /></svg>, false],
  ["Zoom window", <svg width="22" height="22" viewBox="0 0 22 22"><rect x="1.500" y="1.500" width="19" height="19" fill="none" stroke="#555" strokeDasharray="2 2" /><circle cx="10" cy="9" r="7.500" fill="#dde8ea" stroke="#667" strokeWidth="1.500" /><path d="M15 15l5 6" stroke="#444" strokeWidth="3.500" /></svg>, true],
  ["Display settings", <svg width="22" height="22" viewBox="0 0 22 22"><rect x="1.500" y="2.500" width="19" height="15" fill="#ddd" stroke="#555" strokeWidth="1.300" /><rect x="4" y="5" width="14" height="10" fill="#a3bede" stroke="#4a6591" /><path d="M8 18h6l2 3H6z" fill="#777" /></svg>, true],
  ["Grid", <svg width="22" height="22" viewBox="0 0 22 22"><rect x="1" y="1" width="20" height="20" fill="#fff" /><path d="M1.500 1v20M5.500 1v20M9.500 1v20M13.500 1v20M17.500 1v20M20.500 1v20M1 1.500h20M1 5.500h20M1 9.500h20M1 13.500h20M1 17.500h20M1 20.500h20" stroke="#666" /></svg>, true],
  ["Viewports", <svg width="22" height="22" viewBox="0 0 22 22"><g fill="#a3b6d4" stroke="#475e85" strokeWidth="1.300"><rect x="1.500" y="2.500" width="9" height="8" rx="1" /><rect x="11.500" y="2.500" width="9" height="8" rx="1" /><rect x="1.500" y="11.500" width="9" height="8" rx="1" /><rect x="11.500" y="11.500" width="9" height="8" rx="1" /></g></svg>, true],
];

const apps = [
  ["Start", <svg width="30" height="30" viewBox="0 0 30 30"><defs><linearGradient id="win" x1="0" y1="0" x2="1" y2="1"><stop offset="0" stopColor="#78efff" /><stop offset="1" stopColor="#0a8cf5" /></linearGradient></defs><path d="M0 0h14v14H0zM15 0h15v14H15zM0 15h14v15H0zM15 15h15v15H15z" fill="url(#win)" /></svg>],
  ["Search", <svg width="30" height="30" viewBox="0 0 30 30"><circle cx="17" cy="12" r="10.500" fill="#4a4948" stroke="#eee" strokeWidth="2.500" /><path d="M9.500 20L3 27.500" stroke="#eee" strokeWidth="3" strokeLinecap="round" /></svg>],
  ["Files", <svg width="30" height="30" viewBox="0 0 30 30"><path d="M0 2q0-1 2-1h8l3 3h3v4H0z" fill="#e0a000" /><path d="M0 7h11l3-3h14q2 0 2 2v21H0z" fill="#ffd048" /><path d="M5 28v-6q0-2 2-2h16q2 0 2 2v6z" fill="#0a7bd0" /><path d="M10 24h10" stroke="#08549c" strokeWidth="1.500" /></svg>],
  ["Slicer", <svg width="30" height="30" viewBox="0 0 30 30"><circle cx="15" cy="15" r="15" fill="#fff" /><path d="M7 20Q5 6 16 4q5 0 6 4z" fill="#333" /><path d="M23 9q3 16-9 17-4-1-6-3z" fill="#f07020" /></svg>],
  ["Chrome", <svg width="28" height="28" viewBox="0 0 28 28"><circle cx="14" cy="14" r="14" fill="#fcc934" /><path d="M14 14L2 7a14 14 0 0 1 24.500 0z" fill="#de5145" /><path d="M14 14l-1 14A14 14 0 0 1 1.900 7l6 10z" fill="#1a9f57" /><path d="M14 14l5 3-6 11q-6-2-5-12z" fill="#1a9f57" /><circle cx="14" cy="14" r="6.500" fill="#fff" /><circle cx="14" cy="14" r="5" fill="#4285f4" /></svg>],
  ["FreeCAD", <svg width="30" height="30" viewBox="0 0 30 30"><path d="M1 1h15v6H8v5h6v6H8v10H1z" fill="#ff2a10" stroke="#700" /><Cog x={19} y={18} r={11} hole={4} c="#1c46a4" /></svg>],
  ["Fusion 360", <svg width="30" height="30" viewBox="0 0 30 30"><rect width="30" height="30" fill="#fdeddc" /><path d="M9 3h13v4h-8v5h7v4h-6l-1 7H9z" fill="#c8751c" /><path d="M9 3l4 3v17H9z" fill="#a65a10" /><path d="M16 26h9" stroke="#e08a3a" strokeWidth="3" strokeDasharray="2.500 1" /></svg>],
];

const TabCube = ({ dim }) => (
  <svg width="21" height="20" viewBox="0 0 21 20" opacity={dim ? 0.6 : 1}><path d="M0 4l10-3 11 2-9 4z" fill="#777" /><path d="M0 4l11 3v12L0 14z" fill="#aaa" stroke="#555" /><path d="M11 7l10-4v12l-10 4z" fill="#555" /></svg>
);
const Cross = ({ c = "#777" }) => <svg width="12" height="12" viewBox="0 0 12 12"><path d="M1 1l10 10M11 1L1 11" stroke={c} strokeWidth="2" /></svg>;

export default function App() {
  return (
    <Page>
      <GlobalStyle />
      <TitleBar>
        <svg width="20" height="20" viewBox="0 0 20 20"><rect width="20" height="20" fill="#fbdcc0" /><path d="M6 2h9v3h-5v4h4v3h-4v4H6z" fill="#c8751c" /><path d="M10 17h7" stroke="#f3a862" strokeWidth="2" /></svg>
        <Title>Autodesk Fusion 360 (Personal - Not for Commercial Use)</Title>
        <WindowControls>
          <WindowButton aria-label="Minimise"><svg width="12" height="12" viewBox="0 0 12 12"><path d="M0 5.500h12" stroke="#000" /></svg></WindowButton>
          <WindowButton aria-label="Restore"><svg width="13" height="13" viewBox="0 0 13 13"><rect x=".5" y="2.500" width="9" height="10" rx="1.500" fill="none" stroke="#000" strokeWidth="1.200" /><path d="M3 .6h7q2.400 0 2.400 2.400v7" fill="none" stroke="#000" strokeWidth="1.200" /></svg></WindowButton>
          <WindowButton aria-label="Close"><svg width="12" height="12" viewBox="0 0 12 12"><path d="M0 0l12 12M12 0L0 12" stroke="#000" strokeWidth="1.200" /></svg></WindowButton>
        </WindowControls>
      </TitleBar>

      <DocumentBar>
        <QuickTools>
          <QuickButton aria-label="Data panel"><svg width="18" height="18" viewBox="0 0 18 18"><path d="M0 0h5v5H0zM6.500 0h5v5h-5zM13 0h5v5h-5zM0 6.500h5v5H0zM6.500 6.500h5v5h-5zM13 6.500h5v5h-5zM0 13h5v5H0zM6.500 13h5v5h-5zM13 13h5v5h-5z" fill="#5f5f5f" /></svg></QuickButton>
          <QuickButton aria-label="File"><svg width="17" height="20" viewBox="0 0 17 20"><path d="M0 0h11v6h6v14H0zM12 0l5 5h-5z" fill="#5f5f5f" /></svg><Caret color="#5f5f5f" /></QuickButton>
          <QuickButton aria-label="Save"><svg width="18" height="18" viewBox="0 0 18 18"><path d="M0 0h18v18H3l-3-3z" fill="#8b8b8b" /><path d="M4 1h10v6H4zM5 11h8v7H5z" fill="#cacaca" /><path d="M6 2h6v4H6zM7 13h3v5H7z" fill="#8b8b8b" /></svg></QuickButton>
          <QuickPair>
            <QuickButton aria-label="Undo" $gap={9}><svg width="17" height="16" viewBox="0 0 17 16"><path d="M7 1L2 6l5 5M2 6h6q7 0 7 9" fill="none" stroke="#5f5f5f" strokeWidth="2.500" /></svg><Caret color="#5f5f5f" /></QuickButton>
            <QuickButton aria-label="Redo" $gap={9} $dim><svg width="17" height="16" viewBox="0 0 17 16"><path d="M10 1l5 5-5 5M15 6H9Q2 6 2 15" fill="none" stroke="#5f5f5f" strokeWidth="2.500" /></svg><Caret color="#5f5f5f" /></QuickButton>
          </QuickPair>
        </QuickTools>
        <DocumentTabs>
          <DocumentTab $active><TabTitle><TabCube />u arm v58</TabTitle><CloseButton aria-label="Close u arm v58"><Cross /></CloseButton></DocumentTab>
          <DocumentTab><TabTitle><TabCube dim />New_base v1*</TabTitle><CloseButton aria-label="Close New_base v1"><Cross /></CloseButton></DocumentTab>
          <NewTabButton aria-label="New tab"><svg width="16" height="16" viewBox="0 0 16 16"><path d="M8 0v16M0 8h16" stroke="#808080" strokeWidth="3.500" /></svg></NewTabButton>
        </DocumentTabs>
        <AccountTools>
          <DocumentLimit><svg width="20" height="20" viewBox="0 0 20 20"><path d="M0 0h9v6h6l-9 11-1 3H0z" fill="#5f5f5f" /><path d="M10 0l5 5h-5z" fill="#5f5f5f" /><path d="M7 20l1-4 8-8 3.500 3.500-8 7z" fill="#5f5f5f" /></svg>4 of 10</DocumentLimit>
          <button aria-label="Job status"><svg width="20" height="20" viewBox="0 0 20 20"><circle cx="10" cy="10" r="9" fill="none" stroke="#5f5f5f" strokeWidth="1.500" /><circle cx="10" cy="10" r="7" fill="#5f5f5f" /><path d="M10 5v5.500h5" stroke="#cacaca" strokeWidth="1.500" fill="none" /></svg></button>
          <button aria-label="Notifications"><svg width="18" height="20" viewBox="0 0 18 20"><path d="M1 16q3-3 3-8 0-5 4-6V1h2v1q4 1 4 6 0 5 3 8zM6 18h5l-2.500 2z" fill="#5f5f5f" /><circle cx="13" cy="5" r="4" fill="#0696d7" /></svg></button>
          <button aria-label="Help"><svg width="20" height="20" viewBox="0 0 20 20"><circle cx="10" cy="10" r="10" fill="#5f5f5f" /><path d="M6.500 8q0-4 3.500-4t3.500 3q0 2-2 3-1.500 1-1.500 2.500" fill="none" stroke="#cacaca" strokeWidth="2.200" /><circle cx="10" cy="15.500" r="1.500" fill="#cacaca" /></svg></button>
          <button aria-label="Account"><svg width="30" height="30" viewBox="0 0 30 30"><circle cx="15" cy="15" r="15" fill="#93a9c6" /><path d="M8 8q1-7 8-7t7 8q0 7-3 10v3q5 1 6 3-5 5-11 5T5 25q1-2 6-3v-3Q8 16 8 8z" fill="#4c5b72" /></svg></button>
        </AccountTools>
      </DocumentBar>

      <Ribbon>
        <WorkspaceButton>DESIGN <Caret /></WorkspaceButton>
        <RibbonBody>
          <RibbonTabs>
            {["SOLID", "SURFACE", "MESH", "SHEET METAL", "PLASTIC", "UTILITIES"].map((t, i) => <RibbonTab key={t} $active={i === 0}>{t}</RibbonTab>)}
          </RibbonTabs>
          <RibbonGroups>
            {groups.map((g, i) => (
              <React.Fragment key={g.name}>
                {i > 0 && <RibbonDivider />}
                <RibbonGroup $first={i === 0} $min={g.min}>
                  <ToolRow>{g.items.map((n) => <ToolButton key={n} aria-label={n}>{tools[n]}</ToolButton>)}</ToolRow>
                  <GroupLabel>{g.name} <Caret /></GroupLabel>
                </RibbonGroup>
              </React.Fragment>
            ))}
          </RibbonGroups>
        </RibbonBody>
      </Ribbon>

      <Workspace>
        <Scene viewBox="0 171 1920 787" aria-label="Model view">
          <BasePlate />
          <RobotArm />
          <GearMotor />
        </Scene>
        <ViewCube width="110" height="124" viewBox="1800 185 110 124" aria-label="View cube">
          <defs><radialGradient id="soft"><stop offset="0" stopColor="#777" stopOpacity=".8" /><stop offset="1" stopColor="#fff" stopOpacity="0" /></radialGradient></defs>
          <ellipse cx="1852" cy="270" rx="48" ry="34" fill="url(#soft)" />
          <g stroke="#888" strokeWidth="1"><path d="M1811 220l38-18 40 17-40 22z" fill="#f0f0f0" strokeDasharray="5 1" /><path d="M1811 220l38 21v45l-35-23z" fill="#e9e9e9" /><path d="M1849 241l40-22-5 43-35 24z" fill="#e2e2e2" /></g>
          <path d="M1809 212l5 52" stroke="#6a6af0" strokeWidth="2.500" /><path d="M1814 264l42 29" stroke="#ee7f7f" strokeWidth="2.500" />
          <g fontFamily={sans} fill="#85898d" fontSize="10" textAnchor="middle">
            <text transform="translate(1848 224) rotate(24)">TOP</text>
            <text transform="translate(1829 258) rotate(32)">FRONT</text>
            <text transform="translate(1869 258) rotate(-33)">RIGHT</text>
          </g>
          <g fontFamily={sans} fontSize="15" textAnchor="middle"><text x="1807" y="209" fill="#7a7af5">Z</text><text x="1861" y="303" fill="#f08080">X</text></g>
        </ViewCube>

        <SidePanel>
          <PanelBar $open>
            <PanelLead><svg width="13" height="8" viewBox="0 0 13 8"><path d="M6 0v8L0 4zM12.500 0v8l-6-4z" fill="#333" /></svg></PanelLead>
            <PanelTitle>BROWSER</PanelTitle>
            <PanelButton aria-label="Collapse browser"><RoundSign /></PanelButton>
            <Grip />
          </PanelBar>
          <TreeArea>
            <ScrollTrack><ScrollThumb /></ScrollTrack>
            <ul>
              {tree.map(([level, state, visible, icon, label]) => (
                <TreeRow key={label} $level={level}>
                  {state ? (
                    <Expander aria-label={`Toggle ${label}`}>
                      <svg width="15" height="20" viewBox="0 0 15 20">
                        {state === "open" ? <path d="M0 17L13 3v14z" fill="#777" stroke="#444" /> : <path d="M1 2v16h3l7-8-7-8z" fill="#f3f3f3" stroke="#444" strokeWidth="1.500" />}
                      </svg>
                    </Expander>
                  ) : <Expander as="span" />}
                  <TreeChip>
                    <button aria-label={`Visibility of ${label}`}><Eye off={!visible} /></button>
                    <TreeIcon>{treeIcons[icon]}</TreeIcon>
                    {label}
                  </TreeChip>
                </TreeRow>
              ))}
            </ul>
          </TreeArea>
          <PanelBar>
            <PanelLead />
            <PanelTitle>COMMENTS</PanelTitle>
            <PanelButton aria-label="Expand comments"><RoundSign plus /></PanelButton>
            <Grip />
          </PanelBar>
        </SidePanel>

        <NavBar>
          {navIcons.map(([name, icon, menu]) => <NavButton key={name} aria-label={name}>{icon}{menu && <Caret size={8} />}</NavButton>)}
        </NavBar>
      </Workspace>

      <Timeline>
        <TimelineHandle />
        <Playback>
          {playIcons.map(([name, bar, tri]) => (
            <button key={name} aria-label={name}><svg width="18" height="18" viewBox="0 0 18 18"><path d={bar} stroke="#444" strokeWidth="2" /><path d={tri} fill="#444" /></svg></button>
          ))}
        </Playback>
        <FeatureTrack>
          {features.map((f, i) => (
            <Feature key={i}><FeatureButton $marked={i === 0 || i === 16} aria-label={`Feature ${i + 1}`}>{mini[f]}</FeatureButton><Tick /></Feature>
          ))}
          <TrackEnd />
        </FeatureTrack>
        <SettingsButton aria-label="Timeline settings"><svg width="20" height="20" viewBox="0 0 20 20"><Cog x={10} y={10} r={10} hole={3} c="#8c8c8c" /></svg></SettingsButton>
      </Timeline>

      <Taskbar>
        <AppRow>
          {apps.map(([name, icon], i) => <AppButton key={name} aria-label={name} $active={i === 6}>{icon}{i === 6 && <ActiveMark />}</AppButton>)}
        </AppRow>
        <Tray>
          <button aria-label="Show hidden icons"><svg width="16" height="9" viewBox="0 0 16 9"><path d="M1 8l7-7 7 7" fill="none" stroke="#fff" strokeWidth="1.500" /></svg></button>
          <Language>ENG<br />IN</Language>
          <Status aria-label="Network, volume and battery">
            <svg width="20" height="16" viewBox="0 0 20 16"><g fill="none" stroke="#fff" strokeWidth="1.500"><path d="M1 6q9-9 18 0M4 9q6-6 12 0M7 12q3-3 6 0" /></g><circle cx="10" cy="14" r="1.500" fill="#fff" /></svg>
            <svg width="20" height="16" viewBox="0 0 20 16"><path d="M1 6h3l4-4v12l-4-4H1zM12 5l6 6M18 5l-6 6" fill="none" stroke="#fff" strokeWidth="1.400" /></svg>
            <svg width="20" height="16" viewBox="0 0 20 16"><path d="M8 3h9v11H5V9" fill="none" stroke="#fff" strokeWidth="1.400" /><path d="M9 5h6v7H7zM18 6h2v4h-2z" fill="#fff" /><path d="M1 2h6v4q-1 3-3 3T1 6zM2 0v3M6 0v3M4 8v6" fill="#fff" stroke="#fff" /></svg>
          </Status>
          <Clock>12:19<br />28-03-2022</Clock>
        </Tray>
      </Taskbar>
    </Page>
  );
}
